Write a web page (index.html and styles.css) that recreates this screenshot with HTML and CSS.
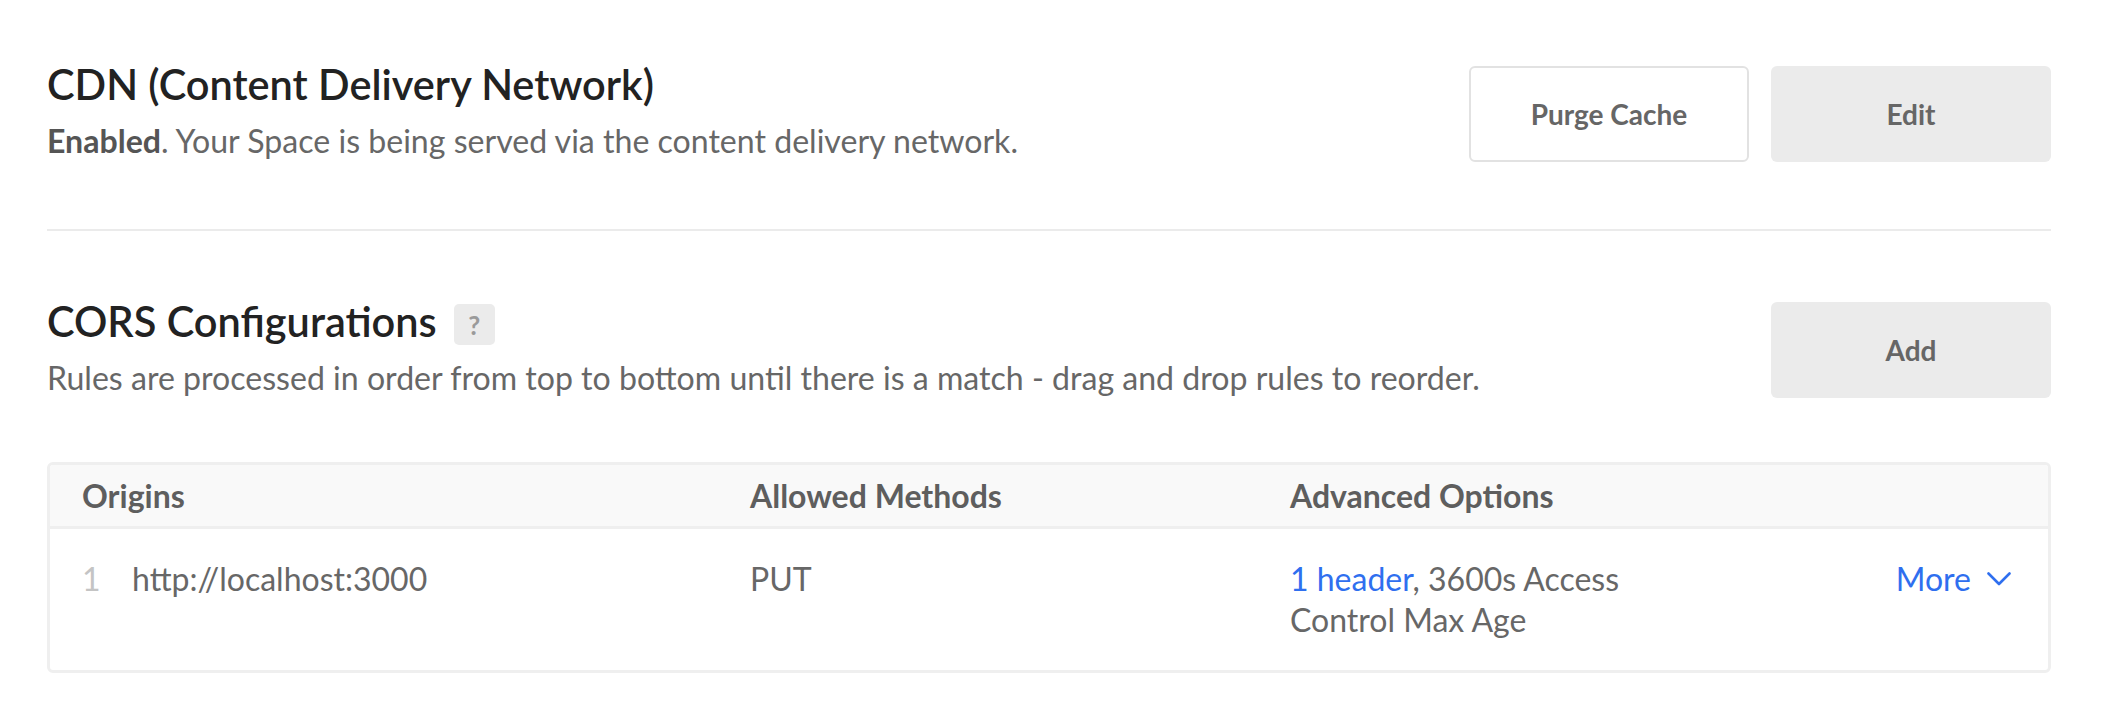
FILE: index.html
```html
<!DOCTYPE html>
<html lang="en">
<head>
<meta charset="utf-8">
<title>Space Settings</title>
<link rel="stylesheet" href="styles.css">
</head>
<body>
<div class="page">
  <section class="sect cdn">
    <div class="sect-text">
      <h2 class="sect-title">CDN (Content Delivery Network)</h2>
      <p class="sect-desc"><strong>Enabled</strong>. Your Space is being served via the content delivery network.</p>
    </div>
    <div class="actions">
      <button class="btn btn-outline">Purge Cache</button>
      <button class="btn btn-fill">Edit</button>
    </div>
  </section>

  <hr class="divider">

  <section class="sect cors">
    <div class="sect-text">
      <h2 class="sect-title title-row">CORS Configurations <span class="help">?</span></h2>
      <p class="sect-desc">Rules are processed in order from top to bottom until there is a match - drag and drop rules to reorder.</p>
    </div>
    <div class="actions">
      <button class="btn btn-fill">Add</button>
    </div>
  </section>

  <div class="table">
    <div class="trow thead">
      <div class="cell">Origins</div>
      <div class="cell">Allowed Methods</div>
      <div class="cell">Advanced Options</div>
    </div>
    <div class="trow tbody">
      <div class="cell"><span class="num">1</span>http://localhost:3000</div>
      <div class="cell">PUT</div>
      <div class="cell cell-adv">
        <div class="adv-text"><a class="link">1 header</a>, 3600s Access Control Max Age</div>
        <a class="more">More
          <svg class="chev" width="24" height="14" viewBox="0 0 24 14" aria-hidden="true"><path d="M1.5 1.5 L12 12 L22.5 1.5" fill="none" stroke="#2f6fef" stroke-width="2.6" stroke-linecap="round" stroke-linejoin="round"/></svg>
        </a>
      </div>
    </div>
  </div>
</div>
</body>
</html>
```

FILE: styles.css
```css
* { box-sizing: border-box; }

body {
  margin: 0;
  background: #ffffff;
  font-family: "Lato", "Open Sans", "Liberation Sans", sans-serif;
  color: #666666;
}

.page {
  padding: 0 60px 0 47px;
}

.sect {
  display: flex;
  justify-content: space-between;
  align-items: flex-start;
}

.cdn { padding-top: 60px; }
.cors { padding-top: 65px; }

.sect-title {
  margin: 0;
  font-size: 41.5px;
  line-height: 48px;
  font-weight: 600;
  color: #222222;
}

.title-row {
  display: flex;
  align-items: center;
}

.help {
  display: inline-flex;
  align-items: center;
  justify-content: center;
  width: 41px;
  height: 41px;
  margin-left: 17px;
  margin-top: 8px;
  border-radius: 5px;
  background: #ebebeb;
  color: #9a9a9a;
  font-size: 26px;
  font-weight: 700;
}

.sect-desc {
  margin: 13px 0 0;
  font-size: 32.1px;
  line-height: 40px;
  color: #676767;
}

.sect-desc strong {
  font-weight: 700;
  color: #555555;
}

.actions {
  display: flex;
  gap: 22px;
  margin-top: 6px;
}

.btn {
  width: 280px;
  height: 96px;
  border-radius: 6px;
  font-family: inherit;
  font-size: 28px;
  font-weight: 700;
  color: #666666;
  cursor: pointer;
}

.btn-outline {
  background: #ffffff;
  border: 2px solid #e2e2e2;
}

.btn-fill {
  background: #ebebeb;
  border: 0;
}

.divider {
  margin: 67px 0 0;
  height: 2px;
  border: 0;
  background: #ebebeb;
}

.table {
  margin-top: 64px;
  border: 3px solid #efefef;
  border-radius: 6px;
  overflow: hidden;
}

.trow {
  display: grid;
  grid-template-columns: 668px 540px 1fr;
}

.thead {
  background: #f9f9f9;
  border-bottom: 3px solid #efefef;
}

.thead .cell {
  padding: 10px 0 10px 32px;
  font-size: 32px;
  line-height: 41px;
  font-weight: 700;
  color: #5e5e5e;
}

.tbody .cell {
  padding: 29px 0 30px 32px;
  font-size: 32px;
  line-height: 41px;
  color: #676767;
}

.num {
  display: inline-block;
  width: 50px;
  color: #c4c4c4;
}

.cell-adv {
  display: flex;
  justify-content: space-between;
  align-items: flex-start;
  padding-right: 37px !important;
}

.adv-text {
  width: 440px;
}

.link {
  color: #2f6fef;
  text-decoration: none;
}

.more {
  display: flex;
  align-items: center;
  gap: 16px;
  color: #2f6fef;
  text-decoration: none;
}
```
